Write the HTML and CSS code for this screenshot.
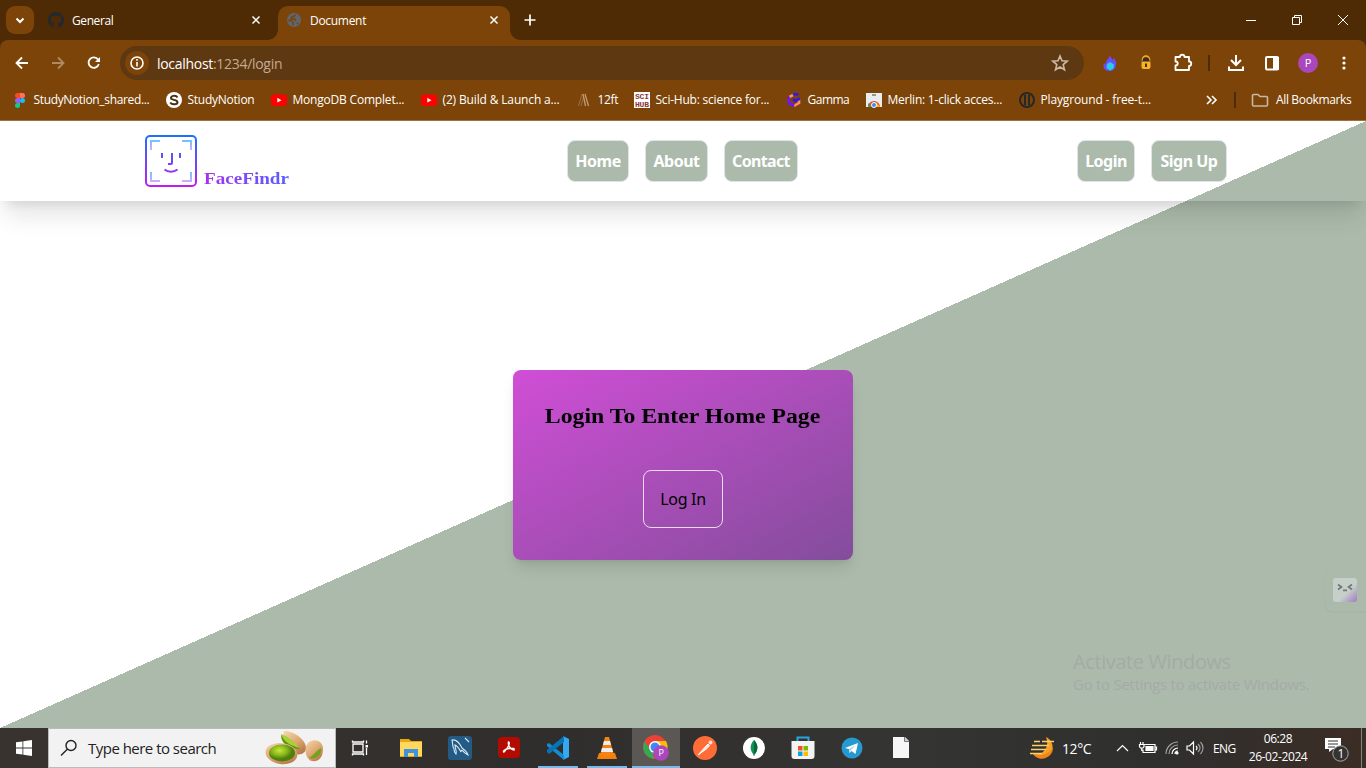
FILE: index.html
```html
<!DOCTYPE html>
<html lang="en">
<head>
<meta charset="utf-8">
<title>Document</title>
<link rel="stylesheet" href="styles.css">
</head>
<body>
<div class="screen">
  <div class="tabstrip">
    <div class="tab-search"><svg width="28" height="28" fill="none" stroke="#fff" stroke-width="2"><path d="M10.500 12.500l3.500 3.500 3.500-3.500"/></svg></div>
    <div class="tab">
      <svg class="fav" width="16" height="16" viewBox="0 0 16 16"><path fill="#24292f" d="M8 0C3.580 0 0 3.580 0 8c0 3.540 2.290 6.530 5.470 7.590.4.070.55-.17.55-.38v-1.490c-2.010.37-2.530-.49-2.690-.94-.09-.23-.48-.94-.82-1.130-.28-.15-.68-.52-.01-.53.63-.01 1.080.58 1.230.82.72 1.210 1.870.87 2.330.66.07-.52.28-.87.51-1.070-1.780-.2-3.640-.89-3.640-3.950 0-.87.31-1.590.82-2.150-.08-.2-.36-1.020.08-2.120 0 0 .67-.21 2.200.82a7.500 7.500 0 0 1 4 0c1.530-1.040 2.200-.82 2.200-.82.44 1.100.16 1.920.08 2.120.51.56.82 1.270.82 2.150 0 3.070-1.870 3.750-3.650 3.950.29.25.54.73.54 1.480v2.200c0 .21.150.46.550.38A8 8 0 0 0 16 8c0-4.420-3.580-8-8-8z"/></svg>
      <span class="tab-title general">General</span>
      <svg class="close" width="16" height="16" stroke="#fff" stroke-width="1.500"><path d="M4.500 4.500l7 7m0-7l-7 7"/></svg>
    </div>
    <div class="tab active">
      <svg class="fav" width="16" height="16" viewBox="0 0 16 16"><circle cx="8" cy="8" r="7" fill="#5f6670"/><path d="M9.500 2.500L8 4.500H6L5 7h3.500L10 9M2 8.500h3l2 2v3M10.500 11.500h2" fill="none" stroke="#7c4408" stroke-width="1.500"/></svg>
      <span class="tab-title document">Document</span>
      <svg class="close" width="16" height="16" stroke="#fff" stroke-width="1.500"><path d="M4.500 4.500l7 7m0-7l-7 7"/></svg>
    </div>
    <svg class="newtab" width="16" height="16" stroke="#fff" stroke-width="1.700"><path d="M8 2.500v11M2.500 8h11"/></svg>
    <svg class="winctl" width="108" height="20" fill="none" stroke="#fff" stroke-width="1"><path d="M0 10.500h10M46.500 7.500h7v7h-7zM48.500 7.500v-2h7v7h-2M92 5l10 10m0-10l-10 10"/></svg>
  </div>

  <div class="toolbar">
    <svg class="navicons" width="96" height="20" fill="none" stroke="#fff" stroke-width="1.800"><path d="M16 10H5M10 4.500L4.500 10l5.500 5.500"/><path stroke="#b08a63" d="M40 10h11M46 4.500l5.500 5.500-5.500 5.500"/><path d="M86 6.500A5.200 5.200 0 1 0 86.800 11"/><path fill="#fff" stroke="none" d="M88 4v5h-5z"/></svg>
    <div class="omnibox">
      <div class="info"><svg width="22" height="22" fill="none" stroke="#fff" stroke-width="1.600"><circle cx="11" cy="11" r="6"/><path d="M11 10v4.500M11 7v1.700"/></svg></div>
      <span class="url">localhost<span>:1234/login</span></span>
      <svg class="star" width="18" height="18" fill="none" stroke="#cbb9a7" stroke-width="1.600"><path d="M9 2l2 4.800 5.200.4-4 3.400 1.300 5.100L9 13l-4.500 2.700 1.300-5.100-4-3.400L7 6.800z"/></svg>
    </div>
    <svg class="exts" width="266" height="24" viewBox="0 0 266 24">
      <path d="M14 4c0 2 2 3 2.500 5L18 7c2.500 4 3 6 1 10-1.500 2.500-3 3-5.500 3C8 20 6.500 16 8 12l1.500 1.500C10 9 13 8 14 4z" fill="#6a4cff"/><path d="M14 11l4 2.500-.5 4-3.500 2-3.500-2.500.5-4z" fill="#24cfe3"/>
      <path d="M46.500 11V8.500a3.500 3.500 0 0 1 7 0V11" fill="none" stroke="#f5b520" stroke-width="1.500"/><rect x="45.500" y="10" width="9" height="8" rx="2" fill="#f5b520"/><path d="M47.500 7h5l1.500 3.500h-8z" fill="#3b2b33"/><path d="M50 12.500v3.500" stroke="#49300c" stroke-width="2"/>
      <path d="M79.500 6H84c0-3 4.500-3 4.500 0H93v4.500c3 0 3 4.500 0 4.500v4H79.500v-4.500c3 0 3-4 0-4z" fill="none" stroke="#fff" stroke-width="1.800" stroke-linejoin="round"/>
      <path d="M113 4v16" stroke="#4e2b04" stroke-width="2"/>
      <path d="M140 4v10m-5-5l5 5 5-5M133 15.500V19h14v-3.500" fill="none" stroke="#fff" stroke-width="2"/>
      <rect x="170" y="6" width="12" height="12.500" rx="1" fill="none" stroke="#fff" stroke-width="2"/><path d="M177 6h6v13h-6z" fill="#fff"/>
      <circle cx="212" cy="12" r="10" fill="#ab47bc"/>
      <g fill="#fff"><circle cx="248" cy="7" r="1.600"/><circle cx="248" cy="12" r="1.600"/><circle cx="248" cy="17" r="1.600"/></g>
      <text x="208.800" y="16" class="avatar-text">P</text>
    </svg>
  </div>

  <div class="bookmarks">
    <div class="bm"><svg width="16" height="16"><path d="M8 1H5.500a2.500 2.500 0 0 0 0 5H8z" fill="#f24e1e"/><path d="M8 1h2.500a2.500 2.500 0 0 1 0 5H8z" fill="#ff7262"/><path d="M8 6H5.500a2.500 2.500 0 0 0 0 5H8z" fill="#a259ff"/><circle cx="10.500" cy="8.500" r="2.500" fill="#1abcfe"/><path d="M8 11H5.500A2.500 2.500 0 1 0 8 13.500z" fill="#0acf83"/></svg><span class="b1">StudyNotion_shared...</span></div>
    <div class="bm"><svg width="16" height="16"><circle cx="8" cy="8" r="8" fill="#fff"/><path d="M11.500 5.500C10 3 5 3.500 5 6c0 2.300 6.500 1.500 6.500 4.200 0 2.500-5.500 3-7.300.3" fill="none" stroke="#493113" stroke-width="2"/></svg><span class="b2">StudyNotion</span></div>
    <div class="bm"><svg width="16" height="16"><rect y="2.500" width="16" height="11.500" rx="3" fill="#f00"/><path d="M6.300 5.800l4.200 2.400-4.200 2.400z" fill="#fff"/></svg><span class="b3">MongoDB Complet...</span></div>
    <div class="bm"><svg width="16" height="16"><rect y="2.500" width="16" height="11.500" rx="3" fill="#f00"/><path d="M6.300 5.800l4.200 2.400-4.200 2.400z" fill="#fff"/></svg><span class="b4">(2) Build &amp; Launch a...</span></div>
    <div class="bm"><svg width="16" height="16" fill="none" stroke="#99724b"><path d="M2.500 14L6 2M5 14l2.500-9"/><path stroke="#c59a70" stroke-width="1.300" d="M9 2l3.500 12M7 2l2.500 12"/></svg><span class="b5">12ft</span></div>
    <div class="bm"><svg width="16" height="16"><path fill="#fff" d="M0 0h16v16H0z"/><text class="sci" x="1" y="7" textLength="14">SCI</text><text class="sci" x="1" y="15" textLength="14">HUB</text></svg><span class="b6">Sci-Hub: science for...</span></div>
    <div class="bm"><svg width="16" height="16" fill="none" stroke-width="2.600"><path stroke="#3218e8" d="M12.500 2.500L9 2 3 5.500"/><path stroke="#ff8c62" d="M3.500 5L7 3M8 14l5-3"/><path stroke="#7414ff" d="M2.800 5v6L8 14"/><path stroke="#ff8c62" d="M13 12V7"/><path stroke="#3218e8" d="M14 6.500L8 9.500M8 6.500v3"/></svg><span class="b7">Gamma</span></div>
    <div class="bm"><svg width="16" height="16"><path fill="#e9edf0" d="M0 1h16v14H0z"/><path d="M6 3h4" stroke="#777" stroke-width="1.500"/><path d="M2 15a6 6 0 0 1 12 0" fill="#e24435"/><path d="M2 11l4 4H2z" fill="#34a853"/><path d="M10 10l4 5h-5z" fill="#fbbc05"/><circle cx="8" cy="13" r="2.500" fill="#4285f4" stroke="#fff"/></svg><span class="b8">Merlin: 1-click acces...</span></div>
    <div class="bm"><svg width="16" height="16"><circle cx="8" cy="8" r="7" fill="none" stroke="#252729" stroke-width="2"/><path d="M6 3v10M10 3v10" stroke="#252729" stroke-width="2"/></svg><span class="b9">Playground - free-t...</span></div>
    <svg class="more" width="16" height="16" fill="none" stroke="#fff" stroke-width="1.600"><path d="M3 4l4 4-4 4M8 4l4 4-4 4"/></svg>
    <i class="sep"></i>
    <div class="bm all"><svg width="18" height="16" fill="none" stroke="#c8b7a4" stroke-width="1.600"><path d="M1.500 12V3.500a1 1 0 0 1 1-1h4.500l2 2h6.500a1 1 0 0 1 1 1V13a1 1 0 0 1-1 1h-13a1 1 0 0 1-1-1z"/></svg><span class="b10">All Bookmarks</span></div>
  </div>

  <main class="page">
    <header class="header">
      <div class="brand">
        <svg width="52" height="52" fill="none" stroke-width="2"><defs><linearGradient id="g" gradientUnits="userSpaceOnUse" x1="0" y1="0" x2="0" y2="52"><stop stop-color="#1a72ff"/><stop offset="1" stop-color="#c31bf0"/></linearGradient><linearGradient id="t" gradientUnits="userSpaceOnUse" x1="0" y1="5" x2="0" y2="16"><stop stop-color="#6cc5ff"/><stop offset="1" stop-color="#dfa6ff"/></linearGradient><linearGradient id="b" gradientUnits="userSpaceOnUse" x1="0" y1="37" x2="0" y2="48"><stop stop-color="#6cc5ff"/><stop offset="1" stop-color="#dfa6ff"/></linearGradient></defs><rect x="1" y="1" width="50" height="50" rx="4" stroke="url(#g)"/><path stroke="url(#t)" d="M6 15V6h9M37 6h9v9"/><path stroke="url(#b)" d="M6 37v9h9M37 46h9v-9"/><path stroke="url(#g)" d="M17 18v5M35 18v5M27 18v10q0 1-1 1h-3M19.500 34.500c3.500 3 9.500 3 13 0"/></svg>
        <span class="brand-name">FaceFindr</span>
      </div>
      <nav class="nav"><a class="pill home">Home</a><a class="pill about">About</a><a class="pill contact">Contact</a></nav>
      <nav class="nav auth"><a class="pill login">Login</a><a class="pill signup">Sign Up</a></nav>
    </header>
    <section class="card">
      <h1 class="card-title">Login To Enter Home Page</h1>
      <button class="login-btn">Log In</button>
    </section>
    <div class="assistant"><svg width="24" height="24"><defs><linearGradient id="m" x1="0" y1="0" x2="1" y2="1"><stop offset=".6" stop-color="#c6cfc9"/><stop offset="1" stop-color="#a07ac2"/></linearGradient></defs><rect width="24" height="24" rx="3" fill="url(#m)"/><path d="M5 6.500l3.500 2.500L5 11.500M19 6.500L15.500 9l3.500 2.500M10 12.300h4" fill="none" stroke="#6e7b74" stroke-width="1.700"/></svg></div>
    <div class="watermark"><div class="w1">Activate Windows</div><div class="w2">Go to Settings to activate Windows.</div></div>
  </main>

  <footer class="taskbar">
    <div class="start"><svg width="16" height="16" fill="#fff"><path d="M0 2.300L6.500 1.400v6.100H0zM7.300 1.300L16 0v7.500H7.300zM0 8.400h6.500v6.200L0 13.700zM7.300 8.400H16V16l-8.700-1.300z"/></svg></div>
    <div class="search">
      <svg width="18" height="18" fill="none" stroke="#222" stroke-width="1.400"><circle cx="11" cy="6.500" r="5"/><path d="M7.300 10.200L1 16.500"/></svg>
      <span class="search-text">Type here to search</span>
      <svg class="nuts" width="60" height="36" viewBox="0 0 60 36"><defs><radialGradient id="n" cx=".4" cy=".35"><stop stop-color="#c9e835"/><stop offset=".6" stop-color="#86b51a"/><stop offset="1" stop-color="#4f7f0c"/></radialGradient><linearGradient id="s" x2=".7" y2="1"><stop stop-color="#f7d8ac"/><stop offset=".6" stop-color="#dda66e"/><stop offset="1" stop-color="#b57b48"/></linearGradient></defs><path d="M19 1c10 0 21 8 22 16 1 5-5 9-11 7C21 20 17 12 19 1z" fill="url(#s)"/><path d="M16 5c9 4 14 9 19 14-9 0-19-4-19-14z" fill="#5f9213"/><path d="M16 4c8 3 14 8 18 14-8-3-15-5-18-14z" fill="#a8d136"/><ellipse cx="16.500" cy="23.500" rx="16" ry="10.500" fill="url(#s)" transform="rotate(8 16 23)"/><ellipse cx="17" cy="23" rx="13" ry="8.500" fill="url(#n)"/><path d="M43 13c5-5 15-3 15 6s-5 13-11 12c-6-1-9-13-4-18z" fill="url(#s)"/><path d="M56 18c1 7-5 12-12 10 4-2 7-7 12-10z" fill="#779f24"/></svg>
    </div>
    <div class="apps">
      <div class="app taskview"><svg width="18" height="18" fill="none" stroke="#fff" stroke-width="1.300"><path d="M2 5h10v8H2zM1.500 1.500v1.500h11V1.500M1.500 16.500V15h11v1.500M15.500 1.500v3M15.500 9v7"/><path d="M14.500 6h2.500v2.500h-2.500z" fill="#fff" stroke="none"/></svg></div>
      <div class="app explorer"><svg width="22" height="20"><path d="M0 1h9l2 2h11v16H0z" fill="#e5a914"/><path d="M0 4h22v14H0z" fill="#ffd85d"/><path d="M4 19v-8h14v8h-4v-4H8v4z" fill="#3c93df"/></svg></div>
      <div class="app"><svg width="24" height="24"><rect width="24" height="24" rx="3" fill="#245b84"/><path d="M4 4c5-1 8 4 10 8 3 2 5 4 6 7-2-1-4-2-5-4-1-1-2-1-2 1-2-4-4-6-6-7 0 3 2 6 1 9-1-1-2-3-2-5C4 10 5 7 4 4zM17 2l4 4" fill="none" stroke="#d6e9f5" stroke-width="1.100"/></svg></div>
      <div class="app"><svg width="22" height="22"><rect width="22" height="21" rx="4" fill="#b30b00"/><path d="M10.500 5c2 0 0 6-4.500 10-1.500 0 0-3 5-3.500s5.500 0 5 1.500c-3 0-6.500-5-5.500-8z" fill="none" stroke="#fff" stroke-width="1.400"/></svg></div>
      <div class="app running"><svg width="24" height="24"><path d="M17 0l6 3v18l-6 3z" fill="#32a9f0"/><path d="M1 8l2-1 15 12v5L1 10z" fill="#168bd2"/><path d="M1 16l2 2L18 6V0L1 14z" fill="#0675b8"/></svg></div>
      <div class="app running"><svg width="22" height="24"><path d="M3 17h16l2 6H1z" fill="#f27f0b"/><path d="M9 1h4l5 18c-3 2-11 2-14 0z" fill="#f58212"/><path d="M8 5h6l1 4H7zM6 12h10l1 4H5z" fill="#eee"/></svg></div>
      <div class="app running chrome"><svg width="26" height="26"><circle cx="12" cy="12" r="12" fill="#ea4335"/><path d="M1.500 6.500L10 18l1 6A12 12 0 0 1 1.500 6.500z" fill="#34a853"/><path d="M12 6h11a12 12 0 0 1-10 18l4-9z" fill="#fbbc05"/><circle cx="12" cy="12" r="6" fill="#fff"/><circle cx="12" cy="12" r="4.500" fill="#4285f4"/><circle cx="18" cy="18" r="7.800" fill="#ab47bc"/><text x="15.500" y="21.200" class="chrome-text">P</text></svg></div>
      <div class="app"><svg width="24" height="24"><circle cx="12" cy="12" r="12" fill="#ff6c37"/><path d="M5 19l8-9 2-2 1.500 1.500-2.500 3z" fill="#ffe1d7" stroke="#fff"/><circle cx="17.500" cy="6.500" r="2" fill="#ffe1d7"/></svg></div>
      <div class="app"><svg width="22" height="22"><circle cx="11" cy="11" r="11" fill="#fff"/><path d="M11 3c5 5 4 11 0 15-4-4-5-10 0-15z" fill="#10934f"/><path d="M11 3c5 5 4 11 0 15z" fill="#08663c"/><path d="M11 16v3" stroke="#50795f"/></svg></div>
      <div class="app"><svg width="24" height="24"><path d="M6.500 6V1.500h11V6" fill="none" stroke="#24a5dc" stroke-width="2"/><path d="M.5 5h23v15q0 3-3 3h-17q-3 0-3-3z" fill="#f3f3f3"/><path fill="#f25022" d="M7 10h4.500v4.500H7z"/><path fill="#7fba00" d="M12.500 10H17v4.500h-4.500z"/><path fill="#00a4ef" d="M7 15.500h4.500V20H7z"/><path fill="#ffb900" d="M12.500 15.500H17V20h-4.500z"/></svg></div>
      <div class="app"><svg width="22" height="22"><circle cx="11" cy="11" r="10.500" fill="#2699d1"/><path d="M4 11l13-5-2.500 11-4-3-2 2-.5-4z" fill="#fff"/><path d="M8 12l7-4-5 5-1.500 3z" fill="#add6ea"/></svg></div>
      <div class="app"><svg width="18" height="22"><path d="M1 0h12l4 4v17H1z" fill="#f6f6f6"/><path d="M12.500 0v4.500H17" fill="#ccc" stroke="#777"/></svg></div>
    </div>
    <div class="tray">
      <svg class="weather" width="26" height="24"><path d="M17 1a11 11 0 1 1-13 17C14 20 21 11 17 1z" fill="#f5a226"/><path d="M4 18a11 11 0 0 0 20-7c-5 9-14 9-20 7z" fill="#ee861d"/><path d="M5 5.500h6M13 5.500h12M3 9.500h17M2 13.500h15M1 17.500h12" stroke="#ffcf6b" stroke-width="1.600"/></svg>
      <span class="temp">12°C</span>
      <svg class="trayicons" width="88" height="20" fill="none" stroke="#fff" stroke-width="1.200"><path d="M1 13l5.500-5.500L12 13"/><path d="M28.500 6.500H39v8H27v-3M39.500 9h1v3h-1M24.500 4v2.500M27 4v2.500M23.500 6.500h4.500v2l-1 1.500h-2.500l-1-1.500zM25.700 10v3"/><path d="M30 8.500h7v4h-7z" fill="#fff"/><g stroke="#a3a3a1"><path d="M50 16a12 12 0 0 1 12-12M53 16a9 9 0 0 1 9-9"/></g><path d="M56 16a6 6 0 0 1 6-6M59 16a3 3 0 0 1 3-3"/><circle cx="61" cy="15" r="1" fill="#fff"/><path d="M71 8h2.500l4-4v12l-4-4H71zM80 8q2 2 0 4"/><path stroke="#9b9b99" d="M82 6q4 4 0 8M84.500 4q5 6 0 12"/></svg>
      <span class="lang">ENG</span>
      <div class="clock"><span class="time">06:28</span><span class="date">26-02-2024</span></div>
      <svg class="notify" width="26" height="26"><path d="M1 2h16v11H9l-4 3v-3H1z" fill="#fff"/><path d="M4 5h10M4 8h10M4 11h7" stroke="#333"/><circle cx="16.500" cy="17.500" r="7.700" fill="#353331" stroke="#aaa"/><text x="13.500" y="22" class="badge-text">1</text></svg>
      <i class="desktop-edge"></i>
    </div>
  </footer>
</div>
</body>
</html>
```
FILE: styles.css
```css
* { box-sizing: border-box; }
body { margin: 0; font-family: "Open Sans", "Noto Sans", sans-serif; }
svg { display: block; flex: none; }
.screen { width: 1366px; height: 768px; display: flex; flex-direction: column; overflow: hidden; background: #4e2b04; }

.tabstrip { height: 40px; display: flex; align-items: center; padding-left: 6px; }
.tab-search { width: 28px; height: 28px; border-radius: 9px; background: #7c4408; margin-right: 6px; }
.tab { width: 238px; height: 34px; margin-top: 6px; display: flex; align-items: center; padding: 0 14px 6px 8px; color: #fff; font-size: 12px; }
.tab .close { margin-left: auto; }
.tab-title { margin-left: 8px; padding-top: 1px; white-space: nowrap; }
.general { letter-spacing: -.4px; }
.document { letter-spacing: -.3px; }
.tab.active { width: 232px; background: #7c4408; border-radius: 10px 10px 0 0; padding-right: 8px; position: relative; }
.tab.active::before, .tab.active::after { content: ""; position: absolute; bottom: 0; width: 10px; height: 10px; }
.tab.active::before { left: -10px; background: radial-gradient(circle at 0 0, transparent 9.500px, #7c4408 10px); }
.tab.active::after { right: -10px; background: radial-gradient(circle at 100% 0, transparent 9.500px, #7c4408 10px); }
.newtab { margin-left: 12px; }
.winctl { margin-left: auto; margin-right: 12px; }

.toolbar { height: 46px; background: #7c4408; border-radius: 8px 8px 0 0; display: flex; align-items: center; padding-left: 12px; }
.navicons { width: 108px; }
.omnibox { width: 964px; height: 34px; border-radius: 17px; background: #5e3810; display: flex; align-items: center; padding: 0 15px 0 5px; }
.info { width: 24px; height: 24px; border-radius: 12px; background: #7c4408; display: flex; align-items: center; justify-content: center; }
.url { margin-left: 8px; color: #fff; font-size: 14px; letter-spacing: -.3px; white-space: nowrap; }
.url span { color: #c3ab93; }
.star { margin-left: auto; }
.exts { margin-left: 12px; }
.avatar-text { font-size: 11px; fill: #fff; }

.bookmarks { height: 35px; background: #7c4408; border-bottom: 1px solid #a06f3e; display: grid; grid-template-columns: 154px 105px 150px 155px 58px 152px 80px 153px 185px 30px 17px 115px; align-items: center; padding: 0 0 7px 12px; color: #fff; font-size: 12px; white-space: nowrap; }
.bm { display: flex; align-items: center; gap: 5.500px; }
.b1, .b5 { letter-spacing: -.35px; }
.b2 { letter-spacing: -.25px; }
.b3 { letter-spacing: -.2px; }
.b4, .b9 { letter-spacing: -.15px; }
.b6, .b8 { letter-spacing: -.22px; }
.b7 { letter-spacing: -.5px; }
.b10 { letter-spacing: -.35px; }
.all { gap: 7px; }
.sep { width: 2px; height: 16px; background: #4e2b04; }
.sci { font: bold 8px "Liberation Mono", monospace; fill: #8f3535; }

.page { height: 607px; position: relative; background: linear-gradient(to bottom right, #fff 50%, #abbaab 50%); display: flex; flex-direction: column; align-items: center; }
.header { width: 1366px; height: 80px; flex: none; display: grid; grid-template-columns: 422px 510px 1fr; align-items: center; padding-left: 145px; box-shadow: 0 20px 25px -5px rgba(0,0,0,.1), 0 8px 10px -6px rgba(0,0,0,.1); }
.brand { display: flex; align-items: flex-end; gap: 7px; }
.brand-name { font: bold 17px/17px "Liberation Serif", serif; color: transparent; background: linear-gradient(90deg, #a532f3, #5361ff); background-clip: text; -webkit-background-clip: text; transform: scaleX(1.125); transform-origin: left; }
.nav { display: flex; gap: 16px; }
.pill { height: 42px; border: 1px solid #dfe4e8; border-radius: 8px; background: #abbaab; color: #fff; font: bold 16px/40px "Noto Sans", sans-serif; text-align: center; letter-spacing: -.5px; white-space: nowrap; }
.home { width: 62px; } .about { width: 63px; } .contact { width: 74px; } .login { width: 58px; } .signup { width: 76px; }
.contact { letter-spacing: -.65px; }
.card { width: 340px; height: 190px; margin-top: 169px; flex: none; border-radius: 8px; background: linear-gradient(to bottom right, #d04ed6, #834d9b); box-shadow: 0 10px 15px -3px rgba(0,0,0,.1), 0 4px 6px -4px rgba(0,0,0,.1); display: flex; flex-direction: column; align-items: center; padding-top: 32px; }
.card-title { margin: 0 0 40px; height: 28px; font: bold 22px/28px "Liberation Serif", serif; white-space: nowrap; color: #000; transform: scaleX(1.08); }
.login-btn { width: 80px; height: 58px; padding: 0; border: 1px solid #e8dcee; border-radius: 8px; background: transparent; color: #000; font: 16px "Noto Sans", sans-serif; letter-spacing: -.3px; }
.assistant { position: absolute; right: 0; top: 448px; width: 41px; height: 42px; padding: 9px 8px; border-radius: 8px 0 0 8px; box-shadow: 0 1px 3px rgba(0,0,0,.05); }
.watermark { position: absolute; left: 1073px; top: 527px; color: #a5aaa7; white-space: nowrap; }
.w1 { font-size: 20px; line-height: 27px; letter-spacing: -.4px; }
.w2 { font-size: 15px; line-height: 18px; letter-spacing: -.27px; }

.taskbar { height: 40px; display: flex; background: linear-gradient(90deg, #38332f, #302e2c 40%, #343433 65%, #2f2f2e 85%, #3b2d25); }
.start { width: 48px; display: flex; align-items: center; justify-content: center; }
.search { width: 288px; background: #f2f2f2; border: 1px solid #bbb; display: flex; align-items: center; padding-left: 11px; color: #222; }
.search-text { margin-left: 10px; width: 177px; font-size: 15px; letter-spacing: -.52px; white-space: nowrap; }
.apps { display: flex; padding-left: 0; }
.app { width: 49px; display: flex; align-items: center; justify-content: center; }
.app.taskview { width: 50px; padding-right: 2px; }
.running { border-bottom: 2px solid #76b9ed; padding-top: 2px; }
.app.running { width: 40px; margin: 0 4.500px; }
.app.chrome { width: 48px; margin: 0 .5px; background: #5a5754; }
.chrome-text { font-size: 9px; fill: #fff; }
.tray { margin-left: auto; display: flex; align-items: center; color: #fff; }
.weather { margin-right: 7px; }
.temp { width: 54px; font-size: 14px; letter-spacing: -.4px; }
.lang { width: 36px; margin-left: 9px; font-size: 12px; letter-spacing: -.55px; }
.clock { width: 58px; display: flex; flex-direction: column; align-items: center; font-size: 12px; line-height: 18px; letter-spacing: -.4px; white-space: nowrap; }
.notify { margin: 2px 0 0 17px; }
.badge-text { font-size: 12px; fill: #fff; }
.desktop-edge { width: 1px; height: 40px; margin: 0 4px 0 11px; background: #858380; }
```
